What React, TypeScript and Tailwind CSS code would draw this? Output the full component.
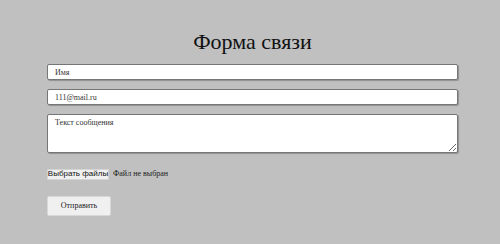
import React from "react";

const serif = '"Liberation Serif", "Times New Roman", serif';

export default function App() {
  const field =
    "block w-full h-[16px] rounded-[2px] border border-[#767676] bg-white pl-[7px] text-[8px] text-[#333] shadow-[1px_1px_1px_rgba(0,0,0,0.25)] outline-none";
  return (
    <div className="w-[500px] h-[244px] bg-[#c0c0c0] overflow-hidden" style={{ fontFamily: serif }}>
      <div className="ml-[47px] w-[411px] pt-[28px]">
        <h1 className="text-center text-[22px] leading-[27px] text-[#111] mb-[9px]">Форма связи</h1>
        <div className="flex flex-col gap-[9px]">
          <input className={field} defaultValue="Имя" readOnly />
          <input className={field} defaultValue="111@mail.ru" readOnly />
          <textarea
            className="block w-full h-[39px] rounded-[2px] border border-[#767676] bg-white pl-[7px] pt-[3px] text-[8px] leading-[10px] text-[#333] shadow-[1px_1px_1px_rgba(0,0,0,0.25)] outline-none"
            defaultValue="Текст сообщения"
            readOnly
          />
        </div>
        <div className="mt-[15px] flex items-center gap-[4px]">
          <div
            className="h-[11px] w-[62px] flex items-center justify-center whitespace-nowrap border border-[#d4d4d4] bg-[#f0f0f0] text-[8px] leading-none text-[#111]"
            style={{ fontFamily: '"Liberation Sans", Arial, sans-serif' }}
          >
            Выбрать файлы
          </div>
          <span className="text-[8px] text-[#222] whitespace-nowrap">Файл не выбран</span>
        </div>
        <button className="mt-[16px] h-[20px] w-[64px] rounded-[2px] border border-[#d8d8d8] bg-[#f0f0f0] text-[8px] text-[#222]">
          Отправить
        </button>
      </div>
    </div>
  );
}
